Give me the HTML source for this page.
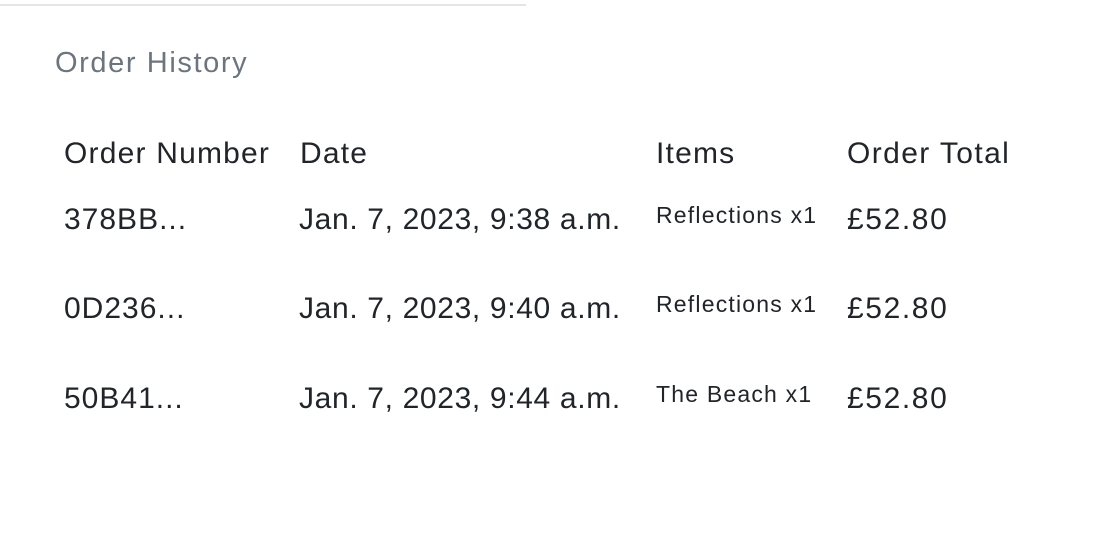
<!DOCTYPE html>
<html><head><style>
body{margin:0;width:1110px;height:540px;background:#fff;font-family:"Liberation Sans",sans-serif;color:#212529;position:relative;overflow:hidden}
.hr{position:absolute;left:0;top:4px;width:526px;height:2px;background:#e5e5e5}
.t{position:absolute;white-space:nowrap;line-height:1}
.h{font-size:30px;letter-spacing:1.2px}
.d{letter-spacing:0.65px}
.p{letter-spacing:1.6px}
.i{letter-spacing:1px}
.s{font-size:23px;letter-spacing:1.2px}
</style></head><body>
<div class="hr"></div>
<div class="t h" style="left:55px;top:49px;color:#6c757d;font-size:29px;letter-spacing:1.6px">Order History</div>
<div class="t h" style="left:64px;top:139px">Order Number</div>
<div class="t h" style="left:300px;top:139px">Date</div>
<div class="t h" style="left:656px;top:139px">Items</div>
<div class="t h" style="left:847px;top:139px;letter-spacing:1.4px">Order Total</div>

<div class="t h i" style="left:64px;top:205px">378BB...</div>
<div class="t h d" style="left:299px;top:205px">Jan. 7, 2023, 9:38 a.m.</div>
<div class="t s" style="left:656px;top:204px">Reflections x1</div>
<div class="t h p" style="left:847px;top:205px">£52.80</div>

<div class="t h i" style="left:64px;top:294px">0D236...</div>
<div class="t h d" style="left:299px;top:294px">Jan. 7, 2023, 9:40 a.m.</div>
<div class="t s" style="left:656px;top:293px">Reflections x1</div>
<div class="t h p" style="left:847px;top:294px">£52.80</div>

<div class="t h i" style="left:64px;top:384px">50B41...</div>
<div class="t h d" style="left:299px;top:384px">Jan. 7, 2023, 9:44 a.m.</div>
<div class="t s" style="left:656px;top:383px">The Beach x1</div>
<div class="t h p" style="left:847px;top:384px">£52.80</div>
</body></html>
